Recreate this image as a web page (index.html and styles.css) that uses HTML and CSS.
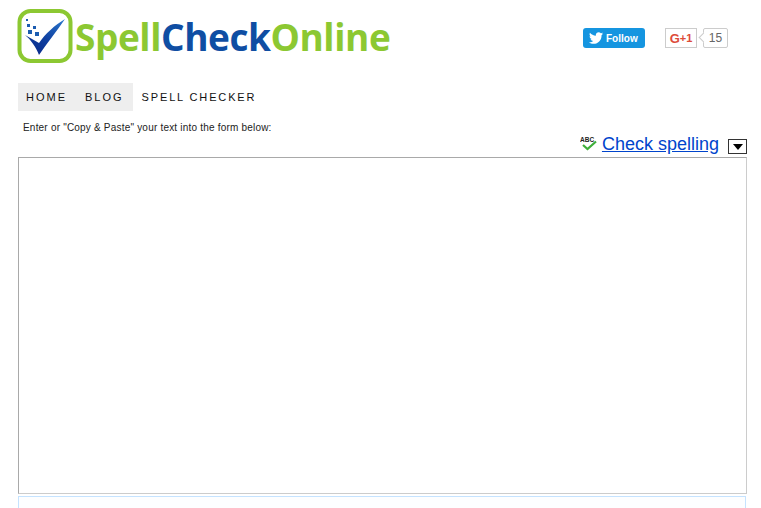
FILE: index.html
```html
<!doctype html>
<html>
<head>
<meta charset="utf-8">
<title>Spell Check Online</title>
<link rel="stylesheet" href="styles.css">
</head>
<body>
<div class="header">
	<a class="logo" href="#">
		<svg class="logo-icon" width="56" height="56" viewBox="0 0 56 56">
			<defs>
				<linearGradient id="tick" x1="1" y1="0" x2="0.300" y2="1">
					<stop offset="0" stop-color="#2a78cc"/>
					<stop offset="0.600" stop-color="#0f3fa0"/>
					<stop offset="1" stop-color="#0a2c8c"/>
				</linearGradient>
			</defs>
			<rect x="2.500" y="3" width="51" height="50" rx="11" fill="#fff" stroke="#8cc832" stroke-width="4"/>
			<path d="M8 27 L22 35 C28 26 38 17 48 11 C40 23 30 35 22 47 C19 39 14 32 8 27 Z" fill="url(#tick)"/>
			<rect x="9" y="11" width="2" height="2" fill="#1c5cb0"/>
			<rect x="10" y="16" width="3" height="3" fill="#1c5cb0"/>
			<rect x="11" y="22" width="4" height="4" fill="#1c5cb0"/>
			<rect x="16" y="18" width="3" height="3" fill="#1c5cb0"/>
			<rect x="18" y="24" width="4" height="4" fill="#1c5cb0"/>
		</svg>
		<span class="logo-text">Spell<b>Check</b>Online</span>
	</a>
	<div class="social">
		<a class="tw-btn" href="#">
			<svg width="14" height="12" viewBox="0 0 24 20"><path fill="#fff" d="M24 2.4c-.9.4-1.8.7-2.8.8 1-.6 1.800-1.600 2.200-2.700-1 .6-2 1-3.100 1.200C19.300.7 18 0 16.600 0c-2.700 0-4.900 2.200-4.900 4.900 0 .4 0 .8.1 1.100C7.700 5.800 4.100 3.900 1.700.9 1.200 1.600 1 2.500 1 3.400c0 1.700.9 3.200 2.200 4.100-.8 0-1.600-.2-2.200-.6v.1c0 2.400 1.700 4.400 3.900 4.800-.4.100-.8.200-1.300.2-.3 0-.6 0-.9-.1.6 2 2.400 3.400 4.600 3.400-1.700 1.300-3.800 2.100-6.100 2.100-.4 0-.8 0-1.200-.1C2.200 19.200 4.800 20 7.500 20c9.100 0 14-7.500 14-14v-.6c1-.7 1.800-1.600 2.500-3z"/></svg>
			Follow
		</a>
		<a class="gplus-btn" href="#"><span class="g">G</span><span class="plus">+1</span></a>
		<span class="gplus-count">15</span>
	</div>
</div>
<ul class="nav">
	<li class="grey first">HOME</li>
	<li class="grey">BLOG</li>
	<li class="spell">SPELL CHECKER</li>
</ul>
<p class="intro">Enter or "Copy &amp; Paste" your text into the form below:</p>
<div class="tools">
	<svg class="abc" width="18" height="16" viewBox="0 0 18 16">
		<text x="0" y="6" class="abc-text">ABC</text>
		<path d="M3 9 L7.500 13 L16 5.500" fill="none" stroke="#3fae3a" stroke-width="2.200"/>
	</svg>
	<a class="check" href="#">Check spelling</a>
	<span class="drop"><i></i></span>
</div>
<textarea class="editor"></textarea>
<div class="result"></div>
</body>
</html>
```

FILE: styles.css
```css
*{ margin:0; padding:0; list-style:none; box-sizing:border-box;}
html,body{ height:508px; overflow:hidden;}
body{ background:#fff; font-family:"Liberation Sans",Arial,sans-serif; color:#222;}
a{ text-decoration:none;}

.header{ display:flex; align-items:center; height:83px; padding:0 0 11px 17px;}
.logo{ display:flex; align-items:center; width:560px;}
.logo-icon{ flex:none;}
.logo-text{ font-family:"Open Sans",sans-serif; font-weight:700; font-size:37px; letter-spacing:-0.45px; color:#8cc832; margin-left:2px;}
.logo-text b{ font-weight:700; color:#0f4ea3;}

.social{ display:flex; align-items:center; margin:4px 0 0 6px;}
.tw-btn{ display:flex; align-items:center; gap:3px; width:62px; height:20px; padding-left:6px; background:#1595e0; border-radius:3px; color:#fff; font-size:10px; font-weight:bold;}
.gplus-btn{ display:flex; align-items:center; justify-content:center; width:32px; height:20px; margin-left:20px; border:1px solid #ccc; background:#fff; font-size:11px; font-weight:bold; color:#dd4b39;}
.gplus-btn .g{ font-size:13px;}
.gplus-count{ position:relative; width:25px; height:20px; margin-left:6px; border:1px solid #ccc; border-radius:2px; font-size:12px; line-height:18px; text-align:center; color:#666;}
.gplus-count:before{ content:""; position:absolute; left:-4px; top:5px; width:6px; height:6px; background:#fff; border-left:1px solid #ccc; border-bottom:1px solid #ccc; transform:rotate(45deg);}

.nav{ display:flex; margin-left:18px; height:28px; font-size:11px; letter-spacing:2px; line-height:28px; color:#111;}
.nav li.grey{ background:#eee; padding:0 9px 0 8px;}
.nav li.first{ padding-right:10px;}
.nav li.spell{ padding-left:9px; letter-spacing:1.850px;}

.intro{ margin:11px 0 0 23px; font-size:10px; letter-spacing:.2px; line-height:12px; color:#222;}

.tools{ display:flex; align-items:center; justify-content:flex-end; height:22px; margin:0 14px 0 0;}
.abc{ margin:0 4px 2px 0;}
.abc-text{ font-size:6.500px; font-weight:bold; fill:#222;}
.check{ font-size:18px; color:#0044cc; text-decoration:underline; margin-bottom:1px;}
.drop{ display:flex; align-items:center; justify-content:center; width:19px; height:15px; margin:3px 0 0 9px; border:1px solid #333; background:#fff;}
.drop i{ width:0; height:0; border:5px solid transparent; border-top:6px solid #000; border-bottom:0;}

.editor{ display:block; width:729px; height:337px; margin:1px 0 0 18px; border:1px solid; border-color:#a9a9a9 #ccc #ccc #a9a9a9; background:#fff; resize:none;}
.result{ width:728px; height:12px; margin:2px 0 0 18px; border:1px solid #c5e3ff; border-bottom:0; background:#fdfeff;}
```
